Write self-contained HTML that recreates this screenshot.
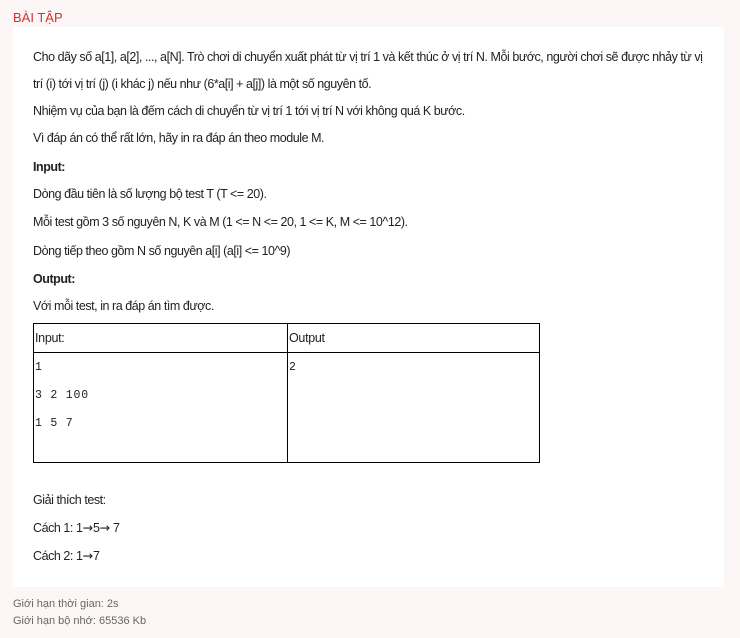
<!DOCTYPE html>
<html><head><meta charset="utf-8"><style>
body{margin:0;background:#fcf7f6;font-family:"Liberation Sans",sans-serif;width:740px;height:638px;overflow:hidden;position:relative;color:#222}
.t{position:absolute;left:13px;top:10px;color:#d0312d;font-size:13px}
.card{position:absolute;left:13px;top:27px;width:711px;height:560px;background:#fff}
.l{position:absolute;left:33px;font-size:12.5px;letter-spacing:-0.45px;white-space:nowrap;line-height:16px}
.b{font-weight:bold}
table{position:absolute;left:33px;top:323px;width:507px;border-collapse:collapse}
td{border:1px solid #000;vertical-align:top;font-size:12.5px;padding:0 1px;letter-spacing:-0.3px}
.m{font-family:"Liberation Mono",monospace;font-size:11.5px;letter-spacing:0.8px}
.f{position:absolute;left:13px;font-size:11px;color:#666}
.a{font-family:"DejaVu Sans",sans-serif;font-size:12.5px;letter-spacing:0}
</style></head><body>
<div class="t">BÀI TẬP</div>
<div class="card"></div>
<div class="l" style="top:49px">Cho dãy số a[1], a[2], ..., a[N]. Trò chơi di chuyển xuất phát từ vị trí 1 và kết thúc ở vị trí N. Mỗi bước, người chơi sẽ được nhảy từ vị</div>
<div class="l" style="top:76px">trí (i) tới vị trí (j) (i khác j) nếu như (6*a[i] + a[j]) là một số nguyên tố.</div>
<div class="l" style="top:103px">Nhiệm vụ của bạn là đếm cách di chuyển từ vị trí 1 tới vị trí N với không quá K bước.</div>
<div class="l" style="top:130px">Vì đáp án có thể rất lớn, hãy in ra đáp án theo module M.</div>
<div class="l b" style="top:159px">Input:</div>
<div class="l" style="top:186px">Dòng đầu tiên là số lượng bộ test T (T &lt;= 20).</div>
<div class="l" style="top:214px">Mỗi test gồm 3 số nguyên N, K và M (1 &lt;= N &lt;= 20, 1 &lt;= K, M &lt;= 10^12).</div>
<div class="l" style="top:243px">Dòng tiếp theo gồm N số nguyên a[i] (a[i] &lt;= 10^9)</div>
<div class="l b" style="top:271px">Output:</div>
<div class="l" style="top:298px">Với mỗi test, in ra đáp án tìm được.</div>
<table><tr style="height:29px"><td style="width:251px;vertical-align:middle">Input:</td><td style="vertical-align:middle">Output</td></tr>
<tr style="height:110px"><td class="m"><div style="margin-top:1px;line-height:28px">1<br>3 2 100<br>1 5 7</div></td><td class="m"><div style="margin-top:1px;line-height:28px">2</div></td></tr></table>
<div class="l" style="top:492px">Giải thích test:</div>
<div class="l" style="top:520px">Cách 1: 1<span class="a">→</span>5<span class="a">→</span> 7</div>
<div class="l" style="top:548px">Cách 2: 1<span class="a">→</span>7</div>
<div class="f" style="top:598px">Giới hạn thời gian: 2s</div>
<div class="f" style="top:615px">Giới hạn bộ nhớ: 65536 Kb</div>
</body></html>
